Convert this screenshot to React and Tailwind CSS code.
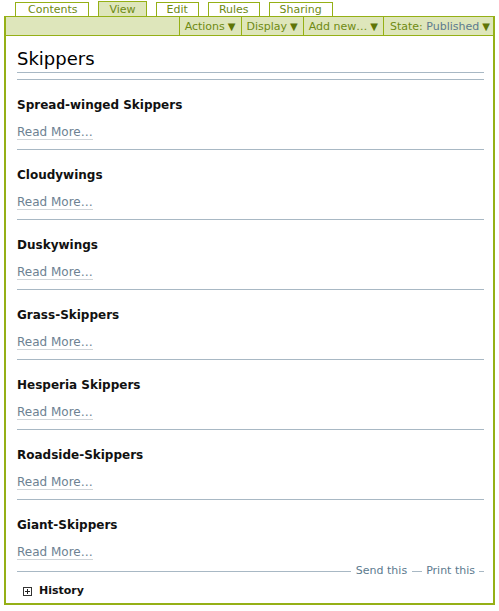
const tabs = ["Contents", "View", "Edit", "Rules", "Sharing"];

const items = [
  "Spread-winged Skippers",
  "Cloudywings",
  "Duskywings",
  "Grass-Skippers",
  "Hesperia Skippers",
  "Roadside-Skippers",
  "Giant-Skippers",
];

const Arrow = () => <span className="ml-[3px] text-[10px] text-[#5f7507]">▼</span>;

export default function App() {
  return (
    <div className="w-[499px] h-[611px] bg-white font-['DejaVu_Sans',sans-serif] pt-[2px]">
      {/* tabs */}
      <div className="flex items-end gap-[9px] pl-[15px] h-[14px] relative z-10">
        {tabs.map((t, i) =>
          t === "View" ? (
            <div
              key={t}
              className="h-[15px] px-[10px] border border-b-0 border-[#95b016] bg-[#dee6bb] text-[11px] leading-[15px] text-[#6e8a12]"
            >
              {t}
            </div>
          ) : (
            <div
              key={t}
              className={
                (i === 0 ? "pl-[12px] pr-[11px]" : "px-[10px]") +
                " h-[14px] border border-b-0 border-[#95b016] bg-white text-[11px] leading-[14px] text-[#6e8a12]"
              }
            >
              {t}
            </div>
          )
        )}
      </div>

      {/* panel */}
      <div className="ml-[4px] w-[491px] h-[589px] border-2 border-t border-[#95b016] flex flex-col">
        <div className="h-[19px] bg-[#dee6bb] border-b border-[#95b016] flex justify-end text-[11px] leading-[19px] text-[#6e8a12]">
          <div className="border-l border-[#95b016] px-[5px]">Actions<Arrow /></div>
          <div className="border-l border-[#95b016] px-[5px]">Display<Arrow /></div>
          <div className="border-l border-[#95b016] px-[5px]">Add new…<Arrow /></div>
          <div className="border-l border-[#95b016] pl-[6px] pr-[3px]">
            State: <span className="text-[#5c7a8e]">Published</span><Arrow />
          </div>
        </div>

        <div className="pl-[11px] pr-[9px] flex flex-col">
          <h1 className="text-[18px] leading-[22px] pt-[12px] pb-[2px] text-black border-b border-[#a8b8c4]">
            Skippers
          </h1>
          <div className="mt-[6px]">
            {items.map((name) => (
              <div key={name} className="border-t border-[#a8b8c4] pt-[17px] pb-[9px]">
                <div className="text-[12px] leading-[16px] font-bold text-[#111]">{name}</div>
                <div className="mt-[11px] text-[12px] leading-[16px]">
                  <span className="text-[#6d8292] border-b border-[#cfd5d9]">Read More…</span>
                </div>
              </div>
            ))}
          </div>
          <div className="flex items-center -mt-[5px] text-[11px] leading-[14px] text-[#5c7a8e]">
            <div className="flex-1 h-px bg-[#a8b8c4]" />
            <span className="px-[5px]">Send this</span>
            <div className="w-[10px] h-px bg-[#a8b8c4]" />
            <span className="px-[4px]">Print this</span>
            <div className="w-[5px] h-px bg-[#a8b8c4]" />
          </div>
          <div className="flex items-center mt-[6px] pl-[6px] text-[11px] leading-[14px] font-bold text-[#111]">
            <span className="w-[9px] h-[9px] border border-[#333] flex items-center justify-center mr-[7px]">
              <svg width="7" height="7" viewBox="0 0 7 7">
                <path d="M1 3.5h5M3.5 1v5" stroke="#222" strokeWidth="1" />
              </svg>
            </span>
            History
          </div>
        </div>
      </div>
    </div>
  );
}
